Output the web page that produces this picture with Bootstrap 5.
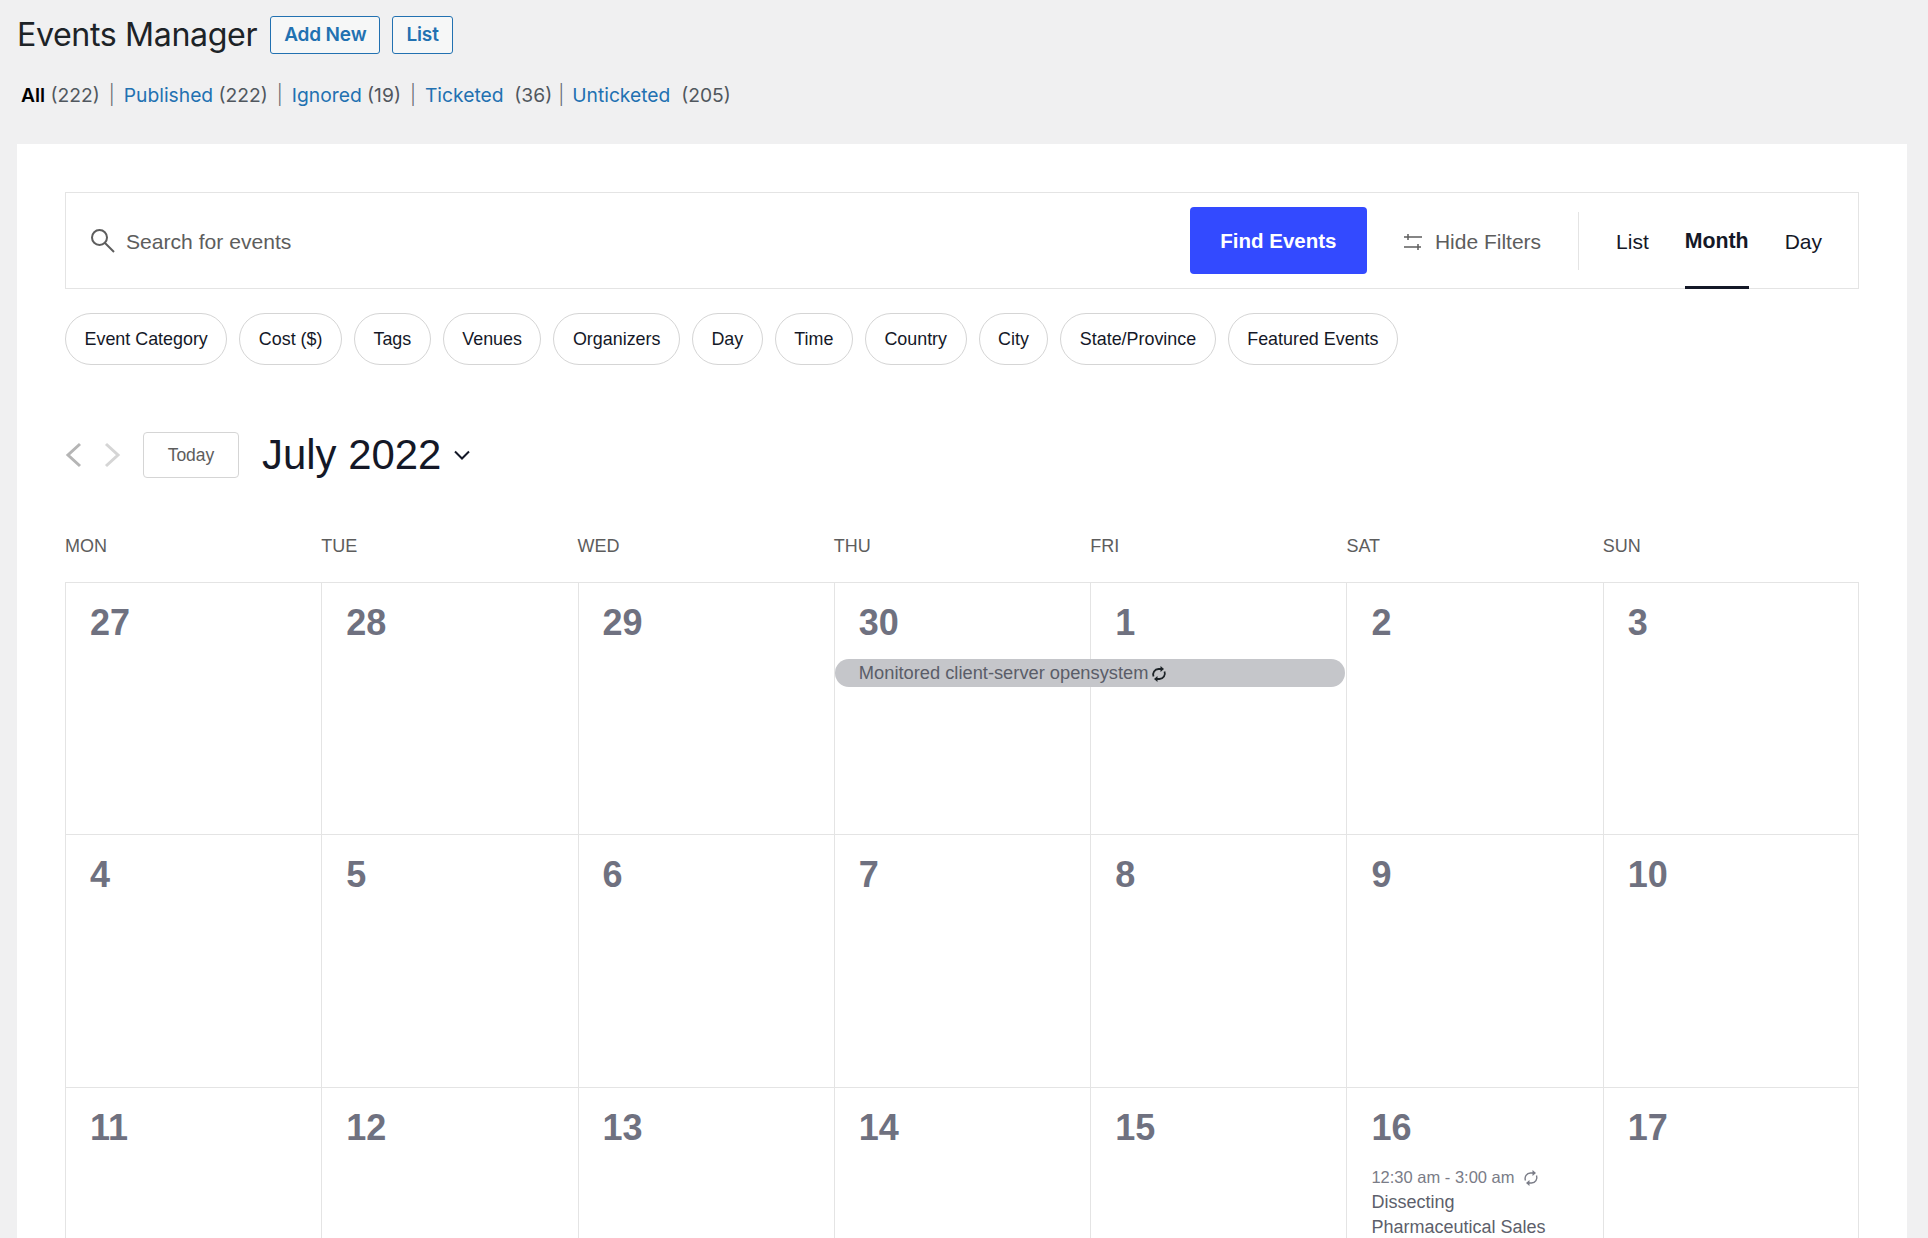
<!DOCTYPE html>
<html lang="en">
<head>
    <meta charset="UTF-8">
    <meta name="viewport" content="width=device-width, initial-scale=1.0">
    <title>Events Manager</title>
    <link rel="stylesheet" href="https://cdn.jsdelivr.net/npm/bootstrap@5.3.0/dist/css/bootstrap.min.css">
    <style>
        html, body { height: 100%; overflow: hidden; }
        body { background: #f0f0f1; color: #1d2327; font-family: "Liberation Sans", Arial, sans-serif; }
        .page-wrap { padding: 0 21px 0 17px; height: 1238px; overflow: hidden; }
        .admin-head { height: 70px; gap: 13px; font-family: Inter, "Liberation Sans", sans-serif; }
        .admin-title { font-size: 32.2px; font-weight: 400; margin: 0; letter-spacing: -.4px; color: #1d2327; }
        .admin-btn { font-size: 19px; font-weight: 600; letter-spacing: -.15px; color: #2271b1; background: #f6f7f7; border: 1px solid #2271b1; border-radius: 3px; height: 38px; padding: 0 13px; line-height: 36px; }
        .admin-btn:hover { color: #135e96; border-color: #135e96; background: #f6f7f7; }
        .admin-btn + .admin-btn { margin-left: -1px; }
        .sub-tabs { height: 74px; padding: 11px 0 0 4px; margin: 0; font-family: Inter, "Liberation Sans", sans-serif; font-size: 19.25px; color: #50575e; list-style: none; }
        .sub-tabs a { color: #2271b1; text-decoration: none; }
        .sub-tabs b { color: #000; font-weight: 600; }
        .sub-tabs .sep { margin: 0 9px; font-weight: 300; color: #646970; }
        .sub-tabs .sep-tight { margin: 0 8px 0 6px; }
        .main-panel { background: #fff; padding: 48px 48px 0; height: 1094px; }
        .search-bar { height: 97px; border: 1px solid #e4e4e4; padding: 0 36px 0 25px; }
        .search-text { font-size: 21.1px; color: #5d5d5d; padding-top: 2px; margin-left: 11px; }
        .find-btn { background: #334aff; border: 0; color: #fff; font-size: 20.5px; font-weight: 700; width: 177px; height: 67px; border-radius: 4px; padding: 2px 0 0; }
        .find-btn:hover { background: #334aff; color: #fff; }
        .hide-filters { font-size: 21px; color: #5d5d5d; margin-left: 37px; gap: 13px; padding-top: 2px; }
        .view-sep { width: 1px; height: 58px; background: #e4e4e4; margin: 0 37px; }
        .view-tabs { gap: 36px; height: 100%; }
        .view-tabs a { font-size: 21px; color: #141827; text-decoration: none; height: 96px; line-height: 98px; display: block; }
        .view-tabs a.on { font-size: 21.3px; font-weight: 700; border-bottom: 3px solid #141827; line-height: 96px; }
        .pill-row { gap: 12px; margin-top: 24px; }
        .pill { font-size: 17.9px; color: #141827; height: 52px; line-height: 50px; padding: 0 18.5px; border: 1px solid #d5d5d5; border-radius: 26px; background: #fff; }
        .cal-nav { margin-top: 67px; height: 46px; }
        .next-arrow { margin-left: 22px; }
        .today-btn { width: 96px; height: 46px; border: 1px solid #d5d5d5; border-radius: 4px; font-size: 17.5px; color: #5d5d5d; line-height: 44px; text-align: center; margin: 0 23px 0 22px; }
        .month-name { font-size: 41.9px; color: #141827; line-height: 46px; }
        .month-caret { margin-left: 13px; }
        .week-grid { display: grid; grid-template-columns: repeat(7, 1fr); }
        .week-head { margin-top: 55px; height: 48.5px; color: #5d5d5d; font-size: 18px; line-height: 26px; }
        .day-grid { border-top: 1px solid #e4e4e4; }
        .day-cell { height: 252.5px; padding: 18px 24px 0 24px; border-left: 1px solid #e4e4e4; border-bottom: 1px solid #e4e4e4; position: relative; }
        .day-cell:nth-child(7n) { border-right: 1px solid #e4e4e4; }
        .day-num { font-size: 36px; font-weight: 700; color: #6f7180; line-height: 44px; display: block; }
        .multi-day { position: absolute; left: 0; top: 76px; width: 510px; height: 28px; border-radius: 14px; background: #c5c6ca; color: #5a5d68; font-size: 18.3px; line-height: 28px; padding: 0 24px; z-index: 2; }
        .multi-day svg { vertical-align: -3px; margin-left: -3px; }
        .event-time { font-size: 16.5px; color: #7a7c87; line-height: 25px; margin-top: 15px; }
        .event-time svg { vertical-align: -3px; }
        .event-title { font-size: 18px; color: #5d5f6b; line-height: 25px; }
    </style>
</head>
<body>
    <div class="page-wrap">
        <div class="admin-head d-flex align-items-center">
            <h1 class="admin-title">Events Manager</h1>
            <a href="#" class="btn admin-btn">Add New</a>
            <a href="#" class="btn admin-btn">List</a>
        </div>
        <ul class="sub-tabs">
            <li><b>All</b> (222)<span class="sep">|</span><a href="#">Published</a> (222)<span class="sep">|</span><a href="#">Ignored</a> (19)<span class="sep">|</span><a href="#">Ticketed</a>&nbsp; (36)<span class="sep sep-tight">|</span><a href="#">Unticketed</a>&nbsp; (205)</li>
        </ul>

        <div class="main-panel">
            <div class="search-bar d-flex align-items-center">
                <svg width="24" height="24" viewBox="0 0 24 24" fill="none" stroke="#5d5d5d" stroke-width="2"><circle cx="8.500" cy="8.500" r="7.500"/><path d="M14 14l9 9"/></svg>
                <span class="search-text flex-grow-1">Search for events</span>
                <button class="btn find-btn">Find Events</button>
                <div class="hide-filters d-flex align-items-center">
                    <svg width="18" height="18" viewBox="0 0 18 18" fill="none" stroke="#5d5d5d" stroke-width="1.500"><path d="M0 4h18M4 1v6M0 14h17M14 11v6"/></svg>
                    <span>Hide Filters</span>
                </div>
                <div class="view-sep"></div>
                <div class="view-tabs d-flex align-items-start">
                    <a href="#">List</a>
                    <a href="#" class="on">Month</a>
                    <a href="#">Day</a>
                </div>
            </div>

            <div class="pill-row d-flex">
                <span class="pill">Event Category</span>
                <span class="pill">Cost ($)</span>
                <span class="pill">Tags</span>
                <span class="pill">Venues</span>
                <span class="pill">Organizers</span>
                <span class="pill">Day</span>
                <span class="pill">Time</span>
                <span class="pill">Country</span>
                <span class="pill">City</span>
                <span class="pill">State/Province</span>
                <span class="pill">Featured Events</span>
            </div>

            <div class="cal-nav d-flex align-items-center">
                <svg width="17" height="26" viewBox="0 0 17 26" fill="none" stroke="#b5b5b5" stroke-width="3"><path d="M15 2L3 13l12 11"/></svg>
                <svg class="next-arrow" width="17" height="26" viewBox="0 0 17 26" fill="none" stroke="#d5d5d5" stroke-width="3"><path d="M2 2l12 11L2 24"/></svg>
                <div class="today-btn">Today</div>
                <div class="month-name">July 2022</div>
                <svg class="month-caret" width="16" height="10" viewBox="0 0 16 10" fill="none" stroke="#141827" stroke-width="2"><path d="M1 1.500l7 7 7-7"/></svg>
            </div>

            <div class="week-grid week-head">
                <div>MON</div><div>TUE</div><div>WED</div><div>THU</div><div>FRI</div><div>SAT</div><div>SUN</div>
            </div>

            <div class="week-grid day-grid">
                <div class="day-cell"><span class="day-num">27</span></div>
                <div class="day-cell"><span class="day-num">28</span></div>
                <div class="day-cell"><span class="day-num">29</span></div>
                <div class="day-cell">
                    <span class="day-num">30</span>
                    <div class="multi-day">Monitored client-server opensystem
                        <svg width="16" height="16" viewBox="0 0 16 16" fill="none" stroke="#1d2327" stroke-width="1.800"><path d="M2.500 10.500A5.500 5.500 0 0 1 7.500 3H10"/><path d="M9.500 0L13 3 9.500 6z" fill="#1d2327" stroke="none"/><path d="M13.500 5.500A5.500 5.500 0 0 1 8.500 13H6"/><path d="M6.500 10L3 13l3.500 3z" fill="#1d2327" stroke="none"/></svg>
                    </div>
                </div>
                <div class="day-cell"><span class="day-num">1</span></div>
                <div class="day-cell"><span class="day-num">2</span></div>
                <div class="day-cell"><span class="day-num">3</span></div>
                <div class="day-cell"><span class="day-num">4</span></div>
                <div class="day-cell"><span class="day-num">5</span></div>
                <div class="day-cell"><span class="day-num">6</span></div>
                <div class="day-cell"><span class="day-num">7</span></div>
                <div class="day-cell"><span class="day-num">8</span></div>
                <div class="day-cell"><span class="day-num">9</span></div>
                <div class="day-cell"><span class="day-num">10</span></div>
                <div class="day-cell"><span class="day-num">11</span></div>
                <div class="day-cell"><span class="day-num">12</span></div>
                <div class="day-cell"><span class="day-num">13</span></div>
                <div class="day-cell"><span class="day-num">14</span></div>
                <div class="day-cell"><span class="day-num">15</span></div>
                <div class="day-cell">
                    <span class="day-num">16</span>
                    <div class="event-time">12:30 am - 3:00 am
                        <svg class="ms-1" width="16" height="16" viewBox="0 0 16 16" fill="none" stroke="#7a7c87" stroke-width="1.400"><path d="M2.500 10.500A5.500 5.500 0 0 1 7.500 3H10"/><path d="M9.500 0L13 3 9.500 6z" fill="#7a7c87" stroke="none"/><path d="M13.500 5.500A5.500 5.500 0 0 1 8.500 13H6"/><path d="M6.500 10L3 13l3.500 3z" fill="#7a7c87" stroke="none"/></svg>
                    </div>
                    <div class="event-title">Dissecting<br>Pharmaceutical Sales</div>
                </div>
                <div class="day-cell"><span class="day-num">17</span></div>
            </div>
        </div>
    </div>
    <script src="https://cdn.jsdelivr.net/npm/bootstrap@5.3.0/dist/js/bootstrap.bundle.min.js"></script>
</body>
</html>
